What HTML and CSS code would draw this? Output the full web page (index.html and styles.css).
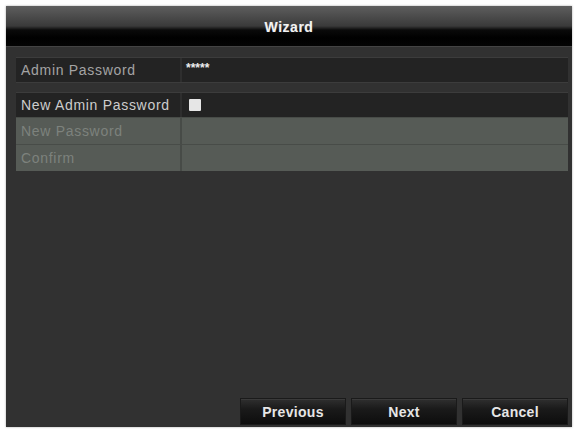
FILE: index.html
```html
<!DOCTYPE html>
<html>
<head>
<meta charset="utf-8">
<link rel="stylesheet" href="styles.css">
</head>
<body>
<div class="dialog">
  <div class="titlebar">Wizard</div>
  <div class="content">
    <div class="row dark first">
      <div class="label">Admin Password</div>
      <div class="value"><span class="dots">*****</span></div>
    </div>
    <div class="row dark second">
      <div class="label">New Admin Password</div>
      <div class="value"><span class="checkbox"></span></div>
    </div>
    <div class="row disabled">
      <div class="label">New Password</div>
      <div class="value"></div>
    </div>
    <div class="row disabled">
      <div class="label">Confirm</div>
      <div class="value"></div>
    </div>
    <div class="spacer"></div>
    <div class="buttons">
      <button class="btn">Previous</button>
      <button class="btn">Next</button>
      <button class="btn">Cancel</button>
    </div>
  </div>
</div>
</body>
</html>
```

FILE: styles.css
```css
html, body {
  margin: 0;
  padding: 0;
  background: #ffffff;
}
body {
  width: 578px;
  height: 435px;
  overflow: hidden;
  font-family: "Liberation Sans", Arial, sans-serif;
}
.dialog {
  margin: 6px 0 0 6px;
  width: 566px;
  height: 421px;
  background: #313131;
  box-shadow: 0 0 2px rgba(0,0,0,0.35);
  display: flex;
  flex-direction: column;
}
.titlebar {
  height: 41px;
  box-sizing: border-box;
  padding-top: 13px;
  text-align: center;
  color: #f2f2f2;
  font-weight: bold;
  font-size: 14px;
  letter-spacing: 0.5px;
  background: linear-gradient(to bottom, #5e5e5e 0px, #4c4c4c 10px, #3a3a3a 20px, #0a0a0a 24px, #000 32px, #050505 41px);
  border-bottom: 1px solid #444;
  text-shadow: 0 0 1px rgba(255,255,255,0.3);
}
.content {
  flex: 1;
  display: flex;
  flex-direction: column;
  padding: 11px 4px 2px 10px;
}
.row {
  display: flex;
  height: 24px;
  font-size: 14px;
  letter-spacing: 0.7px;
}
.row .label {
  width: 166px;
  box-sizing: border-box;
  padding-left: 5px;
  line-height: 24px;
  white-space: nowrap;
  border-right: 2px solid #2e2e2e;
}
.row .value {
  flex: 1;
  display: flex;
  align-items: center;
  padding-left: 6px;
}
.row.dark {
  background: #232323;
  color: #cdcdcd;
}
.row.first {
  color: #a4a4a4;
  margin-bottom: 11px;
  box-shadow: 0 1px 0 #3c3c3c, 0 -1px 0 #3c3c3c;
}
.row.second {
  box-shadow: 0 -1px 0 #3c3c3c;
}
.row.disabled {
  background: #565b56;
  color: #7d827d;
  height: 26px;
  border-top: 1px solid #484c48;
}
.row.disabled .label {
  line-height: 26px;
  border-right: 2px solid #474b47;
}
.dots {
  color: #ededed;
  font-size: 12px;
  font-weight: bold;
  letter-spacing: 0;
  align-self: flex-start;
  margin-top: 3px;
  margin-left: -2px;
}
.checkbox {
  width: 12px;
  height: 12px;
  background: #e6e6e6;
  border-radius: 1px;
  margin-left: 1px;
}
.spacer {
  flex: 1;
}
.buttons {
  display: flex;
  justify-content: flex-end;
  gap: 5px;
}
.btn {
  width: 106px;
  height: 27px;
  border: 1px solid #1a1a1a;
  background: linear-gradient(to bottom, #2f2f2f 0%, #1a1a1a 40%, #0d0d0d 100%);
  color: #e6e6e6;
  font-family: "Liberation Sans", Arial, sans-serif;
  font-weight: bold;
  font-size: 14px;
  letter-spacing: 0.3px;
  padding: 0;
  box-shadow: inset 0 1px 0 #3a3a3a;
}
```
